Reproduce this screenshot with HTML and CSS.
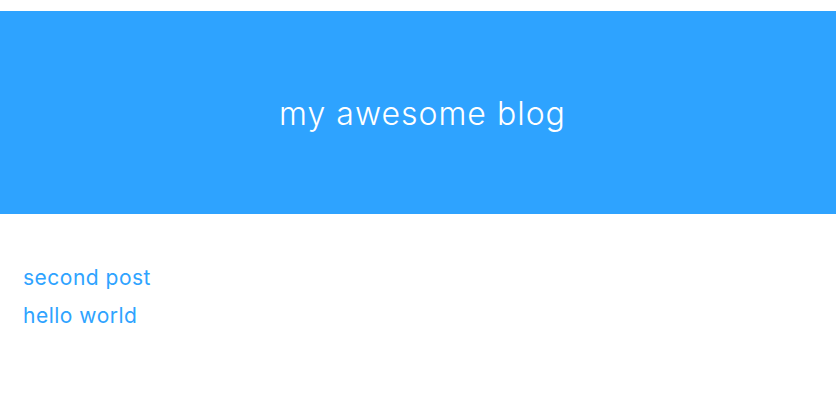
FILE: index.html
```html
<!DOCTYPE html>
<html>
<head>
<meta charset="utf-8">
<link rel="stylesheet" href="styles.css">
</head>
<body>
<header class="banner">
  <h1 class="title">my awesome blog</h1>
</header>
<main class="posts">
  <a class="post-link" href="#">second post</a>
  <a class="post-link" href="#">hello world</a>
</main>
</body>
</html>
```
FILE: styles.css
```css
html, body {
  margin: 0;
  padding: 0;
  background: #fff;
}
body {
  font-family: "Inter", "Liberation Sans", sans-serif;
}
.banner {
  margin-top: 11px;
  height: 203px;
  background: #2ea3ff;
  display: flex;
  align-items: center;
  justify-content: center;
}
.title {
  margin: 0 0 0 9px;
  font-size: 32px;
  font-weight: 300;
  letter-spacing: 1px;
  color: #fff;
  line-height: 1;
  padding-top: 2px;
}
.posts {
  display: flex;
  flex-direction: column;
  align-items: flex-start;
  padding: 52px 23px 0;
  gap: 14px;
}
.post-link {
  font-size: 21px;
  line-height: 24px;
  letter-spacing: 0.5px;
  color: #2ea3ff;
  text-decoration: none;
}
```
